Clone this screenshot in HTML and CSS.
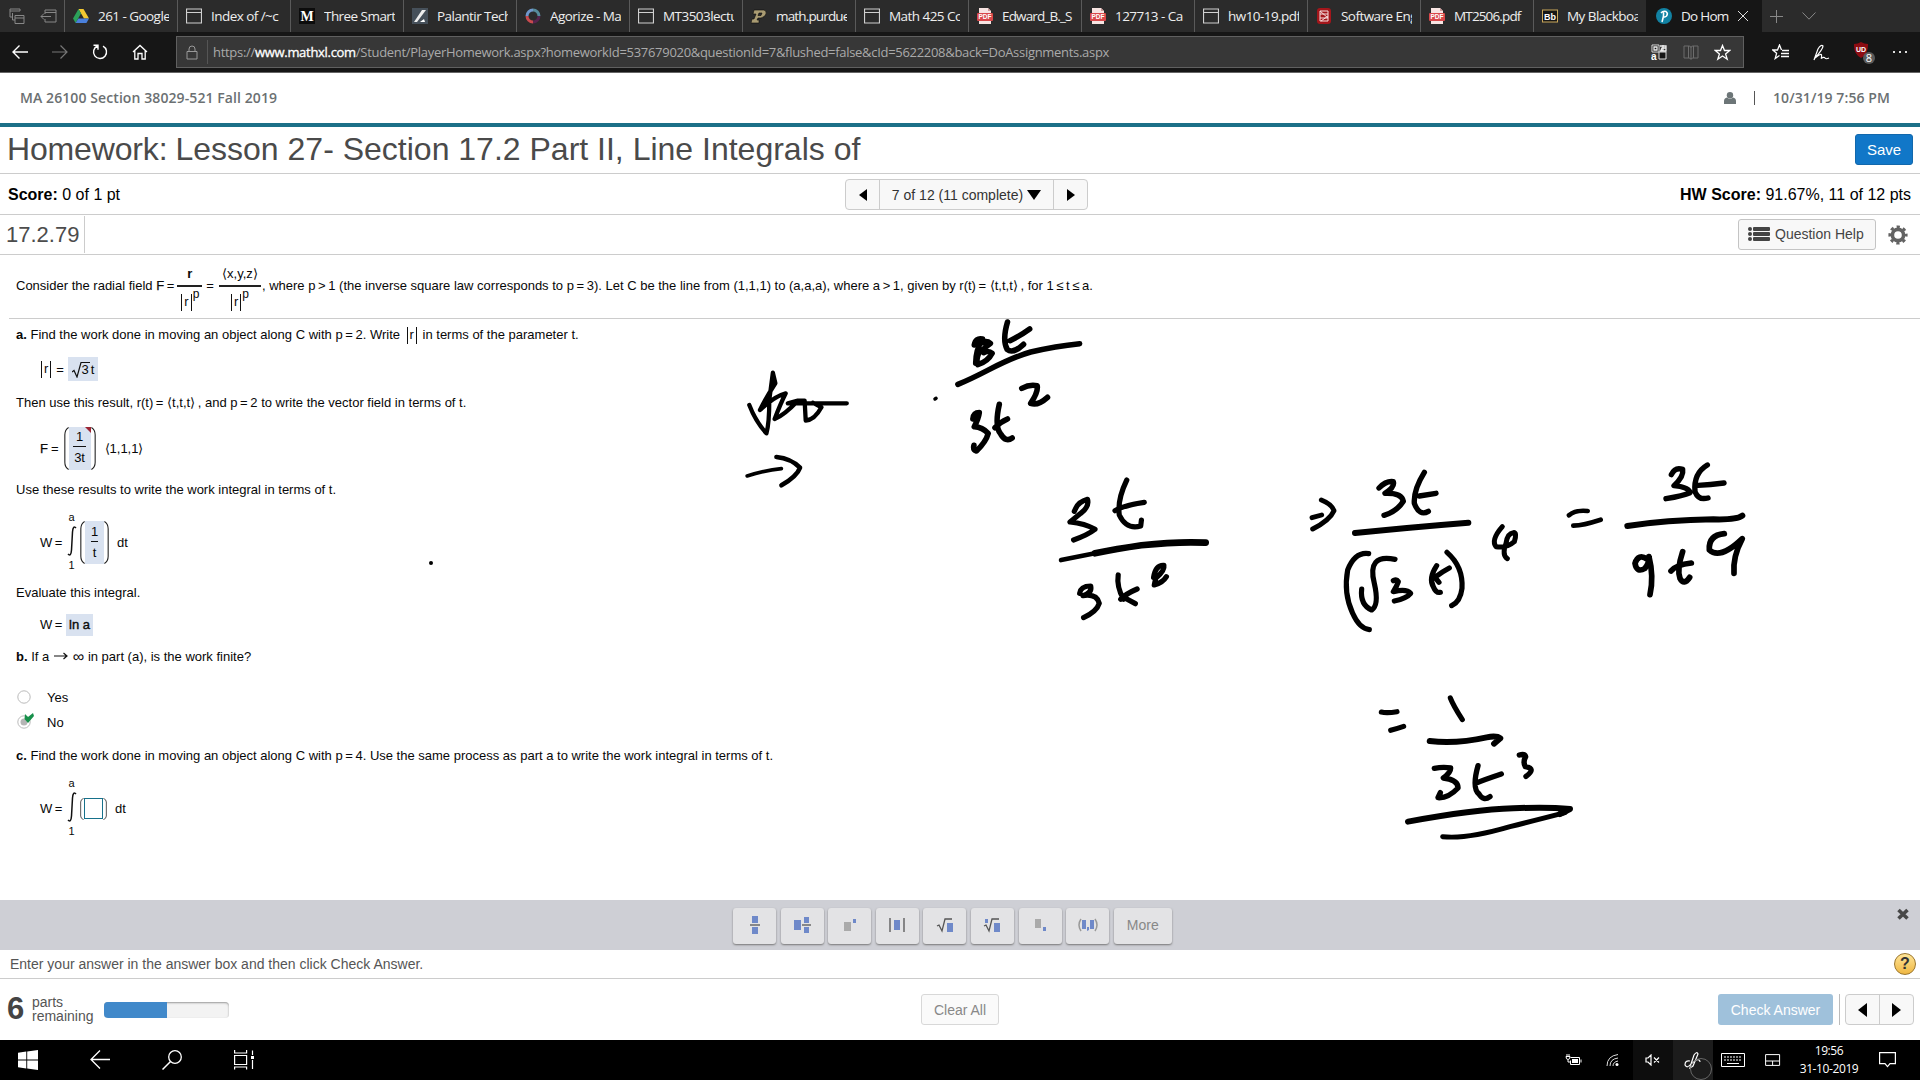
FILE: index.html
```html
<!DOCTYPE html>
<html lang="en">
<head>
<meta charset="utf-8">
<title>Do Homework</title>
<link rel="stylesheet" href="styles.css">
</head>
<body>
<svg class="defs" width="0" height="0">
  <symbol id="page" viewBox="0 0 16 16"><path d="M.5 1h15v14H.5zM.5 4.5h15" fill="none" stroke="#d0d0d0" stroke-width="1.2"/></symbol>
  <symbol id="pdf" viewBox="0 0 16 16"><path d="M2 0h9l3 3v13H2z" fill="#f7e4e2"/><path d="M11 0v3h3" fill="#c99"/><rect y="5" width="16" height="8" rx="1" fill="#d9474a"/><text x="8" y="11.4" font-size="6.5" font-weight="bold" fill="#fff" text-anchor="middle" font-family="Liberation Sans, sans-serif">PDF</text></symbol>
  <symbol id="integral" viewBox="0 0 10 30"><path d="M9 2Q6-1 5.500 6L4.500 24Q4 31 1 28" fill="none" stroke="#111" stroke-width="1.500"/></symbol>
  <symbol id="lparen" viewBox="0 0 6 44" preserveAspectRatio="none"><path d="M5.500.5Q1 3 1 8v28q0 5 4.500 7.500" fill="none" stroke="#222" stroke-width="1.300"/></symbol>
</svg>

<header class="tabs">
  <div class="tab-tools">
    <svg width="16" height="16" viewBox="0 0 16 16" fill="none" stroke="#888"><path d="M4 9H1V1h10v2M1 3h10M6 12H3.500V5M6 7.500h9v8H6zM6 10h9"/></svg>
    <svg width="17" height="14" viewBox="0 0 17 14" fill="none" stroke="#888"><path d="M5 5V1h11v12H5V10M5 3.500h11M1 7.500h10M4 4.500l-3 3 3 3"/></svg>
  </div>
  <div class="tab"><svg viewBox="0 0 16 16"><path d="M5.500 1h5L16 10.500h-5z" fill="#f3c831"/><path d="M5.500 1L8 5.500 2.600 15 0 10.500z" fill="#2ca05a"/><path d="M5.400 10.500H16L13.400 15H2.600z" fill="#4a80dc"/></svg><span>261 - Google</span></div>
  <div class="tab"><svg><use href="#page"/></svg><span>Index of /~c</span></div>
  <div class="tab"><svg viewBox="0 0 16 16"><rect width="16" height="16" fill="#0c0c0c"/><text x="8" y="13" font-family="Liberation Serif, serif" font-weight="bold" font-size="14" fill="#fff" text-anchor="middle">M</text></svg><span>Three Smart</span></div>
  <div class="tab"><svg viewBox="0 0 16 16"><rect width="16" height="16" fill="#46505a"/><path d="M10 2h4L5 14H2z" fill="#eee"/><path d="M8 14l4-3 1 3z" fill="#fff"/></svg><span>Palantir Tech</span></div>
  <div class="tab"><svg viewBox="0 0 16 16" fill="none" stroke-width="3"><path d="M8 2a6 6 0 0 1 6 6" stroke="#568c9c"/><path d="M2 8a6 6 0 0 1 6-6" stroke="#7098cc"/><path d="M8 14a6 6 0 0 1-6-6" stroke="#c94a4f"/><path d="M14 8a6 6 0 0 1-6 6" stroke="#58244e"/></svg><span>Agorize - Ma</span></div>
  <div class="tab"><svg><use href="#page"/></svg><span>MT3503lectu</span></div>
  <div class="tab"><svg viewBox="0 0 16 16"><path d="M3 2h10q3 1 2 4t-5 4H7l-1 2h2v3H0l1-4h2l2-5H2zM8 5L7 7.500h3L11 5z" fill="#a99b72" stroke="#0a0a0a" stroke-width=".6" fill-rule="evenodd"/></svg><span class="tight">math.purdue</span></div>
  <div class="tab"><svg><use href="#page"/></svg><span>Math 425 Co</span></div>
  <div class="tab"><svg><use href="#pdf"/></svg><span class="tight">Edward_B._S</span></div>
  <div class="tab"><svg><use href="#pdf"/></svg><span>127713 - Ca</span></div>
  <div class="tab"><svg><use href="#page"/></svg><span>hw10-19.pdf</span></div>
  <div class="tab"><svg viewBox="0 0 16 16"><rect x="1" width="14" height="16" rx="3" fill="#a4161b"/><path d="M4 3h8v10H4zM4 6h8M4 10h8M4 3l8 7M5 13l7-5" fill="none" stroke="#f6dede"/></svg><span>Software Eng</span></div>
  <div class="tab"><svg><use href="#pdf"/></svg><span class="tight">MT2506.pdf</span></div>
  <div class="tab"><svg viewBox="0 0 16 16"><rect x=".5" y="2" width="15" height="12" fill="#161616" stroke="#caa75a"/><text x="8" y="11.500" font-family="Liberation Sans, sans-serif" font-weight="bold" font-size="9" fill="#fff" text-anchor="middle">Bb</text></svg><span>My Blackboa</span></div>
  <div class="tab active"><svg viewBox="0 0 16 16"><circle cx="8" cy="8" r="8" fill="#1282a3"/><path d="M6 14c1-3 2-7 1.500-10.500M5 5q2-2.500 5-1.500 2.500 2 .5 4.500Q9 9.500 7.500 8.500" fill="none" stroke="#fff" stroke-width="1.500"/></svg><span>Do Hom</span><svg class="close" viewBox="0 0 12 12"><path d="M1 1l10 10M11 1L1 11" stroke="#ddd" fill="none"/></svg></div>
  <svg class="plus" width="13" height="13" viewBox="0 0 13 13"><path d="M6.500 0v13M0 6.500h13" stroke="#888"/></svg>
  <svg class="chev" width="14" height="8" viewBox="0 0 14 8"><path d="M.5.5L7 7.200 13.500.5" fill="none" stroke="#888"/></svg>
</header>

<nav class="address">
  <svg width="16" height="16" viewBox="0 0 16 16"><path d="M16 8H1M7.500 1.500L1 8l6.500 6.500" stroke="#fff" stroke-width="1.400" fill="none"/></svg>
  <svg width="16" height="16" viewBox="0 0 16 16"><path d="M0 8h15M8.500 1.500L15 8l-6.500 6.500" stroke="#777" stroke-width="1.200" fill="none"/></svg>
  <svg width="16" height="16" viewBox="0 0 16 16"><path d="M5.500 2A6.500 6.500 0 1 0 11 2.200M1.500 1.200H6v4.500" stroke="#fff" stroke-width="1.400" fill="none"/></svg>
  <svg width="16" height="16" viewBox="0 0 16 16"><path d="M1 8l7-6.500L15 8M2.800 6.700V15H6V9.500h4V15h3.200V6.700" stroke="#fff" stroke-width="1.300" fill="none"/></svg>
  <div class="url">
    <svg class="lock" width="12" height="15" viewBox="0 0 12 15"><path d="M1 6.500h10v7.500H1zM3 6.500V4q0-3 3-3t3 3v2.500" fill="none" stroke="#999"/></svg>
    <p>https://<b>www.mathxl.com</b>/Student/PlayerHomework.aspx?homeworkId=537679020&amp;questionId=7&amp;flushed=false&amp;cId=5622208&amp;back=DoAssignments.aspx</p>
    <svg class="tr" width="16" height="16" viewBox="0 0 16 16"><path d="M1 1h7v7H1zM8 8h7v7H8z" fill="#151515" stroke="#ddd"/><path d="M9 2h6v5H9M3 3h3v3H3zM12 1v5q-3 1-1-2h4" fill="none" stroke="#eee" stroke-width="1.300"/><text x="0" y="15.500" font-family="Liberation Sans, sans-serif" font-size="10" font-weight="bold" fill="#fff">a</text></svg>
    <svg class="book" width="16" height="16" viewBox="0 0 16 16"><path d="M1 2h5q2 0 2 1.500Q8 2 10 2h5v12h-5q-2 0-2 1.500Q8 14 6 14H1zM8 3v12M5.500 2v12M10.500 2v12" fill="none" stroke="#6d6d6d"/></svg>
    <svg width="17" height="17" viewBox="0 0 17 17"><path d="M8.500 1.500l2 5h5.300l-4.200 3.400 1.600 5.300-4.700-3.200-4.700 3.200 1.600-5.300L1.200 6.500h5.300z" fill="none" stroke="#fff" stroke-width="1.300"/></svg>
  </div>
  <svg class="fav" width="17" height="16" viewBox="0 0 17 16"><path d="M9.500 6L7.500 1l-2 5H.8l3.800 3.300L3.200 14.500 7.500 11.500M10 6.500h7M9 9.500h8M9 12.500h8" fill="none" stroke="#fff" stroke-width="1.300"/></svg>
  <svg class="ink" width="17" height="17" viewBox="0 0 17 17"><path d="M1 16L5 5q3-5 5-3 0 3-8 12Q8 9 8.500 11T8 14.500q3-2 4-.5t4 0" fill="none" stroke="#fff" stroke-width="1.200"/></svg>
  <svg class="ub" width="21" height="24" viewBox="0 0 21 24"><path d="M7 0q3 2 7 2 .5 10-7 14-7.500-4-7-14 4 0 7-2z" fill="#8d0c12"/><text x="7" y="9.500" font-family="Liberation Sans, sans-serif" font-size="7" font-weight="bold" fill="#fff" text-anchor="middle">UD</text><circle cx="15" cy="16" r="6" fill="#5b5b5b"/><text x="15" y="20" font-family="Open Sans, sans-serif" font-size="11" fill="#fff" text-anchor="middle">8</text></svg>
  <svg class="dots" width="16" height="4" viewBox="0 0 16 4" fill="#ddd"><path d="M1 1h2v2H1zM7 1h2v2H7zM13 1h2v2h-2z"/></svg>
</nav>

<div class="course">
  <span>MA 26100 Section 38029-521 Fall 2019</span>
  <div class="user"><svg width="12" height="12" viewBox="0 0 12 12" fill="#6c7577"><circle cx="6" cy="3.300" r="3.200"/><path d="M0 12V9q0-3 3-3.500 3 2.500 6 0 3 .5 3 3.500v3z"/></svg><i></i><span>10/31/19 7:56 PM</span></div>
</div>

<div class="title"><h1><span class="hw">Homework:</span>Lesson 27- Section 17.2 Part II, Line Integrals of</h1><button class="save">Save</button></div>

<div class="score">
  <p><b>Score:</b> 0 of 1 pt</p>
  <div class="pager">
    <span class="arrow"><svg width="8" height="12"><path d="M8 0v12L0 6z"/></svg></span>
    <span class="count">7 of 12 (11 complete)<svg width="14" height="10"><path d="M0 0h14L7 10z"/></svg></span>
    <span class="arrow"><svg width="8" height="12"><path d="M0 0v12l8-6z"/></svg></span>
  </div>
  <p class="hws"><b>HW Score:</b> 91.67%, 11 of 12 pts</p>
</div>

<div class="qbar">
  <div class="qno">17.2.79</div>
  <div class="help"><svg width="22" height="16" viewBox="0 0 22 16" fill="#444"><circle cx="2" cy="3" r="2"/><circle cx="2" cy="8" r="2"/><circle cx="2" cy="13" r="2"/><rect x="5" y="1" width="17" height="4" rx="1"/><rect x="5" y="6" width="17" height="4" rx="1"/><rect x="5" y="11" width="17" height="4" rx="1"/></svg>Question Help</div>
  <svg class="gear" width="20" height="20" viewBox="-10 -10 20 20"><circle r="5.600" fill="none" stroke="#636363" stroke-width="3.600"/><circle r="8.200" fill="none" stroke="#636363" stroke-width="2.800" stroke-dasharray="3.220 3.220" stroke-dashoffset="1.610"/></svg>
</div>

<main>
  <div class="row intro"><span>Consider the radial field <b class="nb">F</b>&thinsp;=</span>
    <span class="frac f1"><span><b>r</b></span><span class="den"><span class="abs">r</span><sup>p</sup></span></span><span class="eq">=</span>
    <span class="frac f2"><span>⟨x,y,z⟩</span><span class="den"><span class="abs">r</span><sup>p</sup></span></span>
    <span class="rest">, where p&thinsp;&gt;&thinsp;1 (the inverse square law corresponds to p&thinsp;=&thinsp;3). Let C be the line from (1,1,1) to (a,a,a), where a&thinsp;&gt;&thinsp;1, given by r(t)&thinsp;= ⟨t,t,t⟩&thinsp;, for 1&thinsp;≤&thinsp;t&thinsp;≤&thinsp;a.</span></div>
  <div class="rule"></div>
  <div class="row h31"><p class="la"><b>a.</b> Find the work done in moving an object along C with p&thinsp;=&thinsp;2. Write <span class="abs">r</span> in terms of the parameter t.</p></div>
  <div class="row h38 ind"><span class="abs">r</span><span class="eqr">=</span><span class="box root"><svg width="18" height="18" viewBox="0 0 18 18"><path d="M0 12l2-1.500L5 17 9 2.500h9" fill="none" stroke="#111" stroke-width="1.200"/></svg><span>3</span><span class="t">t</span></span></div>
  <div class="row h29"><p class="lt">Then use this result, r(t)&thinsp;= ⟨t,t,t⟩&thinsp;, and p&thinsp;=&thinsp;2 to write the vector field in terms of t.</p></div>
  <div class="row h62 ind"><b class="nb">F</b><span class="eqf">=</span><svg class="par"><use href="#lparen"/></svg><span class="box tall wf"><span class="num">1</span><span>3t</span><svg class="flag" width="6" height="6"><path d="M0 0h6v6z" fill="#9c2433"/></svg></span><svg class="par r"><use href="#lparen"/></svg><span class="vec">⟨1,1,1⟩</span></div>
  <div class="row h21"><p class="lu">Use these results to write the work integral in terms of t.</p></div>
  <div class="row h86 ind"><span class="w">W&thinsp;=</span><span class="int"><span>a</span><svg width="10" height="30"><use href="#integral"/></svg><span>1</span></span><svg class="par"><use href="#lparen"/></svg><span class="box tall wi"><span class="num">1</span><span>t</span></span><svg class="par r"><use href="#lparen"/></svg><span class="dt">dt</span></div>
  <div class="row h13">Evaluate this integral.</div>
  <div class="row h51 ind"><span class="w wl">W&thinsp;=</span><span class="box ln">ln a</span></div>
  <div class="row h14"><b>b.</b>&nbsp;If a <svg class="to" width="14" height="8" viewBox="0 0 14 8"><path d="M0 4h13M9.500 1L13 4 9.500 7" fill="none" stroke="#111" stroke-width="1.200"/></svg><span class="inf">∞</span>&nbsp;in part (a), is the work finite?</div>
  <div class="row choice first"><svg width="20" height="22" viewBox="0 0 20 22"><circle cx="8" cy="11" r="6.200" fill="#fff" stroke="#bbb"/></svg>Yes</div>
  <div class="row choice"><svg width="20" height="22" viewBox="0 0 20 22"><circle cx="8" cy="11" r="6.200" fill="#fff" stroke="#bbb"/><circle cx="8" cy="11" r="3.500" fill="#b5b5b5"/><path d="M9 3l3 3 5-4 1 3-6 7-3.500-4z" fill="#17904a"/></svg>No</div>
  <div class="row h42"><p class="lc"><b>c.</b> Find the work done in moving an object along C with p&thinsp;=&thinsp;4. Use the same process as part a to write the work integral in terms of t.</p></div>
  <div class="row h64 ind"><span class="w">W&thinsp;=</span><span class="int"><span>a</span><svg width="10" height="30"><use href="#integral"/></svg><span>1</span></span><svg class="par small"><use href="#lparen"/></svg><span class="entry"></span><svg class="par small r"><use href="#lparen"/></svg><span class="dt">dt</span></div>
</main>

<svg class="inkwork" width="1920" height="880" viewBox="0 0 1920 880">
  <g transform="translate(720 300) scale(.35714 .33333)">
    <path d="M82 315Q100 365 130 400Q138 370 138 300L148 218L155 250Q130 290 112 330Q150 290 184 280Q170 310 153 357Q180 345 218 302L190 310L355 310M218 302L237 302L240 362Q265 360 284 322L260 308" stroke-width="4.300"/>
    <path d="M76 528Q130 510 172 506" stroke-width="3.600"/>
    <path d="M158 471Q200 476 224 503Q216 528 172 556" stroke-width="4.600"/>
    <path d="M602 297l3-2" stroke-width="3.500"/>
    <path d="M666 253C740 222 790 180 870 156Q940 138 1007 131" stroke-width="5.500"/>
    <path d="M712 135Q716 112 735 117Q716 150 716 190M722 135Q744 118 757 130Q730 150 738 158Q752 150 762 160Q750 185 722 194Q715 180 728 150M805 66Q790 120 804 148Q820 163 850 133M812 122Q840 108 867 87" stroke-width="5.600"/>
    <path d="M708 357Q710 338 726 338Q724 355 712 380Q735 382 751 400Q745 425 718 453Q708 450 711 436M782 313Q768 380 786 402Q800 428 818 414M770 383Q785 366 805 357M845 265Q867 252 888 257Q892 275 870 310Q890 318 917 292" stroke-width="5.600"/>
    <path d="M992 634L996 625Q1005 605 1029 598Q1035 620 1010 640L980 666Q1022 670 1050 688Q1030 705 990 720M1139 540Q1112 600 1118 645Q1138 690 1178 678L1180 660M1106 632Q1130 616 1188 607" stroke-width="5.200"/>
    <path d="M955 780Q1040 762 1110 747Q1260 720 1360 728" stroke-width="4.700"/>
    <path d="M1050 760Q1110 747 1180 736Q1280 724 1360 728" stroke-width="6.600"/>
    <path d="M1007 880Q1010 858 1038 858Q1042 880 1016 887Q1055 880 1062 910Q1055 935 1018 953M1115 825Q1110 860 1130 898M1168 867Q1135 882 1122 898M1130 892L1163 911M1214 832Q1220 794 1243 796Q1246 812 1220 835L1216 855Q1240 848 1250 830" stroke-width="5.200"/>
  </g>
  <g transform="translate(1280 440) scale(.33333)">
    <path d="M124 180Q155 192 162 212Q150 240 98 267M96 233L125 225" stroke-width="4.900"/>
    <path d="M225 279Q390 262 565 248" stroke-width="6"/>
    <path d="M297 144Q318 122 340 125Q345 142 315 160Q365 158 370 184Q350 215 312 226M433 97Q400 150 403 190Q418 230 445 214M418 168L468 160" stroke-width="5.400"/>
    <path d="M266 341Q225 335 203 390Q190 460 218 520Q238 566 268 569M245 447Q240 495 275 510Q298 495 283 430Q260 340 345 358M340 422Q350 417 355 425Q350 440 340 455Q380 445 392 460Q380 475 343 483M470 377Q445 415 460 440Q468 460 481 457M508 384Q485 396 465 412L477 427M501 337Q550 380 546 445Q541 485 515 497" stroke-width="5.200"/>
    <path d="M667 260Q632 300 648 320Q680 325 703 305Q712 275 700 278Q682 280 678 310Q665 345 682 356" stroke-width="5"/>
    <path d="M867 226Q885 209 923 213M880 257Q910 256 962 239" stroke-width="4.700"/>
    <path d="M1042 258Q1160 240 1300 238Q1370 240 1387 227" stroke-width="6"/>
    <path d="M1174 104Q1185 80 1208 88Q1212 110 1182 137Q1228 142 1230 158Q1210 167 1158 176M1282 75Q1240 100 1245 155Q1256 182 1284 174M1254 136Q1290 135 1332 129" stroke-width="5.400"/>
    <path d="M1101 357Q1075 340 1065 370Q1070 400 1095 385Q1110 365 1107 350Q1122 410 1110 464M1208 335Q1190 390 1200 415Q1212 438 1229 412M1173 393Q1188 374 1234 369M1333 281Q1285 285 1288 330Q1320 360 1387 296Q1358 350 1362 400" stroke-width="5.700"/>
    <path d="M304 816Q320 820 351 815M332 871Q350 866 371 859M511 774Q520 797 547 839" stroke-width="5.100"/>
    <path d="M449 903Q530 912 620 892Q650 886 661 895L642 911" stroke-width="5.900"/>
    <path d="M463 985Q490 980 512 984Q512 998 490 1014Q535 1020 534 1044Q505 1075 474 1073L481 1058M594 977Q575 1045 597 1062Q610 1085 630 1070M587 1030Q610 1020 664 1002M718 945Q735 940 737 950Q728 966 736 980Q770 985 738 1009" stroke-width="5.400"/>
    <path d="M384 1145Q580 1109 700 1105Q800 1100 870 1107L840 1122" stroke-width="6"/>
    <path d="M488 1190Q560 1198 690 1160Q790 1135 855 1118" stroke-width="5"/>
  </g>
  <circle cx="431" cy="563" r="2" fill="#000"/>
</svg>

<div class="palette">
  <div class="keys">
    <button><svg width="12" height="18" viewBox="0 0 12 18"><path d="M3 0h6v7H3zM3 11h6v7H3z" class="bl"/><path d="M1 9h10" class="ln1"/></svg></button>
    <button><svg width="18" height="16" viewBox="0 0 18 16"><path d="M1 3h7v10H1zM11 0h5v6h-5zM11 10h5v6h-5z" class="bl"/><path d="M9 8h9" class="ln1"/></svg></button>
    <button><svg width="14" height="14" viewBox="0 0 14 14"><path d="M1 4h7v9H1z" fill="#aaa"/><path d="M10 1h3v4h-3z" class="bl"/></svg></button>
    <button><svg width="16" height="14" viewBox="0 0 16 14"><path d="M5 2h6v10H5z" class="bl"/><path d="M1 0v14M15 0v14" class="ln1"/></svg></button>
    <button><svg width="18" height="16" viewBox="0 0 18 16"><path d="M11 6h6v9h-6z" class="bl"/><path d="M1 9l2-1 3 6L9 2h7" class="ln1"/></svg></button>
    <button><svg width="18" height="16" viewBox="0 0 18 16"><path d="M11 6h6v9h-6zM2 2h3v4H2z" class="bl"/><path d="M1 9l2-1 3 6L9 2h7" class="ln1"/></svg></button>
    <button><svg width="14" height="14" viewBox="0 0 14 14"><path d="M2 1h6v9H2z" fill="#aaa"/><path d="M10 9h3v4h-3z" class="bl"/></svg></button>
    <button><svg width="22" height="14" viewBox="0 0 22 14"><path d="M5 2h4v9H5zM13 2h4v9h-4zM10 9h2v3l-2 1z" class="bl"/><path d="M4 1q-4 6 0 12M18 1q4 6 0 12" fill="none" stroke="#999" stroke-width="1.500"/></svg></button>
    <button class="more">More</button>
  </div>
  <svg class="x" width="12" height="12" viewBox="0 0 12 12"><path d="M1.500 2l9 8.500M10.500 2l-9 8.500" stroke="#484848" stroke-width="3.600"/></svg>
</div>

<div class="instr"><span>Enter your answer in the answer box and then click Check Answer.</span><div class="q">?</div></div>

<footer>
  <b class="six">6</b><div class="parts">parts<br>remaining</div><div class="bar"><div style="width:50%"></div></div>
  <button class="clear">Clear All</button>
  <button class="check">Check Answer</button><i></i>
  <div class="pager low"><span class="arrow"><svg width="9" height="14"><path d="M9 0v14L0 7z"/></svg></span><span class="arrow"><svg width="9" height="14"><path d="M0 0v14l9-7z"/></svg></span></div>
</footer>

<div class="taskbar">
  <div class="left">
    <svg width="20" height="20" viewBox="0 0 20 20" fill="#fff"><path d="M0 2.800L8.300 1.600V9.500H0zM9.200 1.500L20 0v9.500H9.200zM0 10.500h8.300v8L0 17.200zM9.200 10.500H20V20L9.200 18.600z"/></svg>
    <svg width="20" height="20" viewBox="0 0 20 20"><path d="M20 9.500H1M10 .5L1 9.500l9 9" fill="none" stroke="#fff" stroke-width="1.300"/></svg>
    <svg width="20" height="20" viewBox="0 0 20 20"><circle cx="13" cy="7" r="6.300" fill="none" stroke="#fff" stroke-width="1.300"/><path d="M8.500 11.500L.5 19.500" stroke="#fff" stroke-width="1.500"/></svg>
    <svg width="20" height="20" viewBox="0 0 20 20"><path d="M.6 5.500h12v9H.6zM.6 0v3h12V0M.6 19.500V17h12v2.500M18.500.5V5M18.500 10v9" fill="none" stroke="#fff" stroke-width="1.200"/><path d="M17 6h3v3h-3z" fill="#fff"/></svg>
  </div>
  <div class="tray">
    <span><svg width="17" height="12" viewBox="0 0 17 12"><path d="M5.500 3.500h9v7h-9v-4M1 2.500h4q0 3-2 3t-2-3M2 0v2M4 0v2M3 5.500V8h2M16 5.500v3" fill="none" stroke="#fff"/><path d="M7 5h6v4H7z" fill="#fff"/></svg></span>
    <span class="wifi"><svg width="14" height="14" viewBox="0 0 14 14"><path d="M1 13Q1 3 12 1.500M4 13q0-7 8-8M7 13q0-4 5-5" fill="none" stroke="#ddd"/><circle cx="11" cy="11.500" r="1.500" fill="#fff"/></svg></span>
    <span class="vol"><svg width="16" height="12" viewBox="0 0 16 12"><path d="M1 4h2l3-3v10L3 8H1zM9 3.500l5 5M14 3.500l-5 5" fill="none" stroke="#fff" stroke-width="1.200"/></svg></span>
    <span class="pen"><svg width="18" height="17" viewBox="0 0 18 17"><path d="M7 12L10 3q3-4 4-1L9 14l-3 2zM6 9q-5-1-5 4 2 4 6-1l5-4q4-1 4 2" fill="none" stroke="#fff" stroke-width="1.200"/></svg><em></em></span>
    <svg class="kb" width="24" height="14" viewBox="0 0 24 14"><path d="M.5.500h23v13H.5z" fill="none" stroke="#fff"/><path d="M3 4h18M3 7h18" stroke="#fff" stroke-dasharray="2 1"/><path d="M6 10.500h12" stroke="#fff"/></svg>
    <svg class="tp" width="16" height="12" viewBox="0 0 16 12"><path d="M.6.6h14v10.800H.6zM.6 7h14M7.600 7v4.400" fill="none" stroke="#fff"/></svg>
    <div class="clock">19:56<br>31-10-2019</div>
    <svg class="note" width="17" height="16" viewBox="0 0 17 16"><path d="M.6.600h15.800v11H11l-2.500 3-2.500-3H.6z" fill="none" stroke="#fff" stroke-width="1.200"/></svg>
  </div>
</div>
</body>
</html>
```
FILE: styles.css
```css
* { box-sizing: border-box; margin: 0; padding: 0; }
body { width: 1920px; height: 1080px; overflow: hidden; background: #fff; color: #111; font-family: "Liberation Sans", Arial, sans-serif; }
svg { display: block; flex: none; }
.defs { position: absolute; }
button { border: 0; font-family: inherit; font-size: 15px; }

.tabs { display: flex; align-items: center; height: 32px; background: #2b2b2b; font: 14px "Open Sans", sans-serif; color: #eee; }
.tab-tools { display: flex; align-items: center; gap: 15px; width: 64px; height: 32px; padding-left: 9px; }
.tab { display: flex; align-items: center; width: 113px; height: 32px; padding-left: 8px; border-left: 1px solid #5a5a5a; }
.tab svg { width: 16px; height: 16px; margin-right: 9px; }
.tab span { width: 71px; padding-bottom: 1px; overflow: hidden; white-space: nowrap; font-size: 13.500px; letter-spacing: -.55px; }
.tab span.tight { letter-spacing: -.85px; }
.tab.active { width: 116px; background: #161616; border-color: #161616; padding-left: 9px; }
.tab.active span { width: 56px; letter-spacing: -.75px; }
.tab svg.close { width: 12px; height: 12px; margin: 0; }
.plus { margin-left: 8px; }
.chev { margin-left: 19px; }

.address { display: flex; align-items: center; height: 41px; padding-left: 12px; background: #161616; border-bottom: 1px solid #666; gap: 24px; }
.url { display: flex; align-items: center; width: 1568px; height: 32px; margin-left: 4px; background: #373737; border: 1px solid #606060; }
.lock { margin-left: 9px; margin-right: 9px; }
.url p { flex: 1; height: 24px; padding-left: 5px; border-left: 1px solid #555; color: #aaa; font: 13px/24px "Open Sans", sans-serif; letter-spacing: -.3px; white-space: nowrap; }
.url b { color: #fff; font-weight: 400; -webkit-text-stroke: .3px #fff; }
.book { margin: 0 15px 0 16px; }
.url > svg:last-child { margin-right: 12px; }
.fav { margin-left: 4px; }
.ub { margin: 3px 0 0 0; }
.dots { margin-left: -7px; }

.course { display: flex; justify-content: space-between; align-items: center; height: 54px; padding: 3px 30px 4px 20px; border-bottom: 4px solid #1c7088; font: 600 14px "Open Sans", sans-serif; letter-spacing: .09px; color: #6b7072; }
.user { display: flex; align-items: center; }
.user i { width: 1px; height: 14px; margin: 0 18px 0 18px; background: #555; }

.title { display: flex; justify-content: space-between; align-items: center; height: 47px; padding: 0 7px 1px 7px; border-bottom: 1px solid #ccc; }
h1 { font-size: 32px; font-weight: 400; color: #4a4a4a; white-space: nowrap; }
.hw { margin-right: 8px; letter-spacing: -.15px; }
.save { width: 58px; height: 31px; border-radius: 3px; background: #1177c8; border: 1px solid #1268ac; color: #fff; }

.score { display: flex; align-items: center; height: 41px; padding: 1px 9px 0 8px; border-bottom: 1px solid #ccc; font-size: 16px; color: #000; }
.score p { width: 837px; }
.score p.hws { flex: 1; text-align: right; }
.pager { display: flex; width: 243px; height: 31px; border: 1px solid #ccc; border-radius: 4px; background: #f8f8f8; font-size: 14px; color: #333; }
.pager span { display: flex; align-items: center; justify-content: center; }
.arrow { width: 33px; }
.count { flex: 1; gap: 4px; border: solid #ccc; border-width: 0 1px; white-space: nowrap; }
.qbar { display: flex; align-items: center; height: 40px; border-bottom: 1px solid #ccc; }
.qno { width: 85px; height: 37px; padding-left: 6px; margin-right: auto; border-right: 1px solid #ccc; font-size: 22px; line-height: 37px; color: #4c4c4c; }
.help { display: flex; align-items: center; gap: 5px; width: 138px; height: 31px; padding-left: 9px; padding-bottom: 1px; border: 1px solid #c4c4c4; border-radius: 3px; background: #f8f8f8; font-size: 14px; color: #444; white-space: nowrap; }
.gear { margin: 0 12px; }

main { height: 645px; padding-left: 16px; font-size: 13px; line-height: 15px; color: #080808; }
.row { display: flex; align-items: center; white-space: pre; }
.ind { padding-left: 24px; }
.nb { font-weight: 400; -webkit-text-stroke: .25px #111; }
.intro { height: 63px; padding-bottom: 2px; white-space: nowrap; }
.intro > span:first-child { white-space: pre; }
.rule { height: 1px; margin-left: -7px; background: #ccc; }
.frac { display: flex; flex-direction: column; align-items: center; margin-top: 14px; }
.frac > span:first-child { height: 20px; line-height: 17px; }
.frac > .den { height: 36px; width: 100%; padding: 7px 0 0 4px; border-top: 2px solid #222; }
.f1 { width: 25px; margin-left: 3px; }
.f2 { width: 42px; margin-left: 5px; }
.frac.f2 > .den { padding-left: 12px; }
.eq { margin-left: 4px; }
.rest { margin-left: 1px; }
.abs { display: inline-block; padding: 0 2px; border: solid #111; border-width: 0 1px; height: 17px; line-height: 16px; }
.la .abs { margin: 0 2px 0 3px; }
sup { margin-left: 1px; font-size: 12px; line-height: 1px; vertical-align: 8px; }
.h31 { height: 31px; padding-top: 1px; } .h38 { height: 38px; } .h29 { height: 29px; } .h62 { height: 62px; }
.h21 { height: 21px; } .h86 { height: 86px; padding-bottom: 1px; } .h13 { height: 13px; } .h51 { height: 51px; }
.h14 { height: 14px; padding-bottom: 2px; } .h42 { height: 42px; padding-bottom: 2px; } .h64 { height: 64px; padding-bottom: 1px; }
.h38 .abs { margin-left: 1px; }
.eqr { margin: 0 4px 0 5px; }
.box { display: flex; align-items: center; justify-content: center; background: #d9e2f0; }
.root { width: 30px; height: 24px; }
.root span { margin-left: -8px; padding-top: 1px; }
.root .t { margin-left: 2px; padding-top: 0; }
.eqf { margin: 0 5px 0 3px; }
.par { width: 5px; height: 43px; }
.par.small { width: 4px; height: 22px; }
.r { transform: scaleX(-1); }
.tall { position: relative; flex-direction: column; height: 43px; padding-bottom: 2px; }
.num { margin: 0 5px 3px; padding-bottom: 2px; border-bottom: 1px solid #111; }
.wf { width: 22px; } .wi { width: 19px; }
.wf .num { width: 13px; margin-left: 0; margin-right: 0; text-align: center; }
.flag { position: absolute; right: 0; top: 0; }
.vec { margin-left: 9px; }
.int { display: flex; flex-direction: column; align-items: center; width: 16px; gap: 3px; padding: 0 1px 3px 0; font-size: 11px; line-height: 12px; }
.w { width: 24px; }
.dt { margin-left: 8px; }
.wl { width: 26px; }
.ln { width: 27px; height: 22px; -webkit-text-stroke: .4px #111; }
.to { margin: 0 5px 0 1px; }
.inf { font-size: 16px; }
.choice { height: 25px; padding-bottom: 1px; }
.choice svg { width: 20px; margin-right: 11px; }
.first { margin-top: 21px; }
.entry { width: 19px; height: 21px; border: 1px solid #17718b; }

.inkwork { position: absolute; left: 0; top: 0; fill: none; stroke: #000; stroke-linecap: round; stroke-linejoin: round; pointer-events: none; }
.inkwork path { vector-effect: non-scaling-stroke; }
.inkwork circle { stroke: none; }

.palette { display: flex; height: 50px; background: #cecfd5; }
.keys { display: flex; gap: 4.600px; padding: 8px 0 0 733px; }
.keys button { display: flex; align-items: center; justify-content: center; width: 43px; height: 36px; padding-bottom: 2px; border-radius: 3px; background: #e3e3e5; box-shadow: 0 1px 2px #777; }
.keys .more { width: 58px; color: #888; font-size: 14px; }
.bl { fill: #6f89c9; }
.ln1 { fill: none; stroke: #555; stroke-width: 1.300; }
.x { margin: 8px 11px 0 auto; }
.instr { display: flex; align-items: center; justify-content: space-between; height: 29px; padding: 0 4px 0 10px; border-bottom: 1px solid #ccc; font-size: 14px; color: #555; }
.q { width: 22px; height: 22px; border: 1px solid #9b762d; border-radius: 50%; background: linear-gradient(#ffe598, #efb743); color: #333; font-weight: bold; font-size: 16px; line-height: 20px; text-align: center; }

footer { display: flex; align-items: center; height: 61px; padding: 0 6px 0 7px; }
.six { width: 25px; padding-bottom: 2px; font-size: 31px; color: #444; }
.parts { width: 72px; padding-bottom: 2px; font-size: 14px; line-height: 14px; color: #555; }
.bar { width: 125px; height: 16px; border-radius: 4px; background: #f3f3f3; box-shadow: inset 0 1px 2px #999; overflow: hidden; }
.bar div { height: 16px; background: #4189ca; }
.clear { width: 78px; height: 31px; margin-left: 692px; margin-right: auto; border: 1px solid #d8d8d8; border-radius: 3px; background: #fafafa; color: #888; font-size: 14px; }
.check { width: 115px; height: 31px; border-radius: 3px; background: #9fc1db; color: #fff; font-size: 14px; }
footer i { width: 1px; height: 31px; margin: 0 5px 0 6px; background: #bbb; }
.low { width: 69px; }
.low .arrow { flex: 1; }
.low .arrow + .arrow { border-left: 1px solid #ccc; }

.taskbar { display: flex; justify-content: space-between; height: 40px; background: #000; color: #fff; font: 12px/18px "Open Sans", sans-serif; }
.left { display: flex; align-items: center; gap: 52px; padding-left: 18px; }
.tray { display: flex; align-items: center; }
.tray span { display: flex; align-items: center; justify-content: center; width: 40px; height: 40px; }
.tray .vol { background: #0d0d0d; }
.tray .pen { position: relative; background: #1c1c1c; }
.pen em { position: absolute; left: 17px; top: 18px; width: 22px; height: 22px; border: 1px solid #666; border-radius: 50%; }
.kb { margin-left: 8px; }
.tp { margin: 0 16px 0 20px; }
.clock { width: 64px; text-align: center; white-space: nowrap; letter-spacing: -.4px; }
.note { margin: 0 24px 0 18px; }
```
